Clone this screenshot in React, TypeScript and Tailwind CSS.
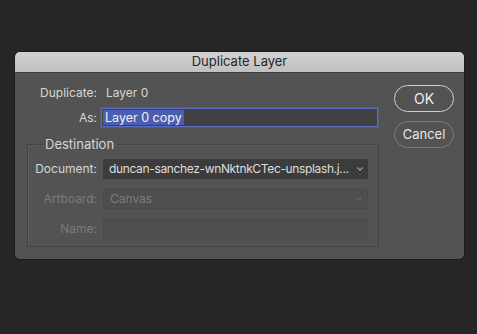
import { ChevronDown } from 'lucide-react'

function Row({ label, disabled, children }: { label: string; disabled?: boolean; children: React.ReactNode }) {
  return (
    <div className="flex h-[20px] items-center">
      <span className={`w-[75px] pr-[6px] text-right ${disabled ? 'text-[#7a7a7a]' : 'text-[#d6d6d6]'}`}>{label}</span>
      {children}
    </div>
  )
}

export default function App() {
  return (
    <div className="flex h-[334px] w-[477px] flex-col bg-[#262626] pt-[52px] pl-[15px] font-['Inter',sans-serif] text-[12px]">
      <div className="h-[207px] w-[449px] overflow-hidden rounded-[5px] bg-[#535353] shadow-[0_0_0_1px_#1c1c1c]">
        <div className="flex h-[21px] items-center justify-center border-b border-[#3c3c3c] bg-gradient-to-b from-[#d2d2d2] to-[#c0c0c0] text-[13px] text-[#262626]">
          Duplicate Layer
        </div>
        <div className="flex pl-[12px] pr-[9px]">
          <div className="w-[352px]">
            <div className="mt-[10px] flex h-[20px] items-center">
              <span className="w-[79px] pr-[9px] text-right text-[#d6d6d6]">Duplicate:</span>
              <span className="text-[#d6d6d6]">Layer 0</span>
            </div>
            <div className="mt-[5px] flex items-center">
              <span className="w-[74px] pr-[4px] text-right text-[#d6d6d6]">As:</span>
              <div className="flex h-[19px] w-[277px] items-center border border-[#5d6bc7] bg-[#414141] px-[1px] shadow-[0_0_0_1px_rgba(93,107,199,0.35)]">
                <span className="bg-[#4a5fb0] px-[2px] text-[12.5px] leading-[15px] text-[#f0f0f0]">Layer 0 copy</span>
              </div>
            </div>
            <div className="relative mt-[17px] h-[103px] border border-[#434343] shadow-[inset_1px_1px_0_#5c5c5c]">
              <span className="absolute -top-[10px] left-[14px] bg-[#535353] px-[3px] text-[13px] text-[#d6d6d6]">Destination</span>
              <div className="flex flex-col gap-[10px] pt-[14px]">
                <Row label="Document:">
                  <div className="flex h-[20px] w-[265px] items-center justify-between bg-[#3c3c3c] pl-[6px] pr-[3px] text-[#dedede]">
                    <span className="whitespace-nowrap tracking-[-0.35px]">duncan-sanchez-wnNktnkCTec-unsplash.j...</span>
                    <ChevronDown className="size-[10px] shrink-0 text-[#bdbdbd]" strokeWidth={2.5} />
                  </div>
                </Row>
                <Row label="Artboard:" disabled>
                  <div className="flex h-[20px] w-[265px] items-center justify-between border border-[#4a4a4a] bg-[#4e4e4e] pl-[6px] pr-[3px] text-[#7c7c7c]">
                    <span>Canvas</span>
                    <ChevronDown className="size-[10px] text-[#6c6c6c]" strokeWidth={2.5} />
                  </div>
                </Row>
                <Row label="Name:" disabled>
                  <div className="h-[20px] w-[265px] border border-[#4a4a4a] bg-[#4e4e4e]" />
                </Row>
              </div>
            </div>
          </div>
          <div className="ml-[15px] flex flex-col gap-[9px] pt-[12px]">
            <button className="flex h-[27px] w-[60px] items-center justify-center rounded-full border-[1.5px] border-[#d0d0d0] text-[14px] text-[#eeeeee]">
              OK
            </button>
            <button className="flex h-[27px] w-[60px] items-center justify-center rounded-full border-[1.5px] border-[#7a7a7a] text-[13px] text-[#e6e6e6]">
              Cancel
            </button>
          </div>
        </div>
      </div>
    </div>
  )
}
